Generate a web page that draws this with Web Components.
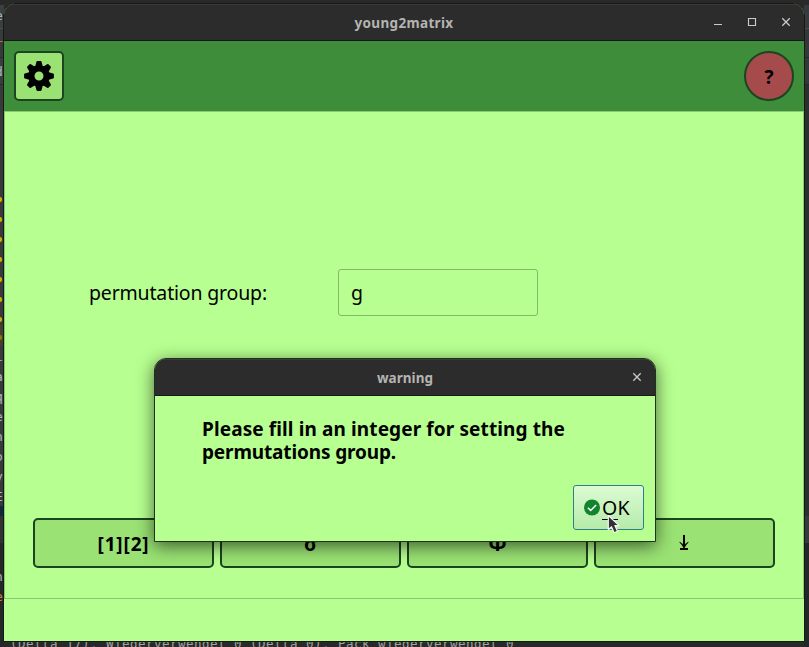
<!DOCTYPE html>
<html lang="en">
<head>
<meta charset="utf-8">
<title>young2matrix</title>
<style>
html,body{margin:0;width:809px;height:647px;overflow:hidden;background:#292929}
body{font-family:"Noto Sans","Open Sans",sans-serif;color:#000}
</style>
</head>
<body>
<y2m-desktop></y2m-desktop>
<script>
const define = (name, html, setup) => customElements.define(name, class extends HTMLElement {
  constructor() {
    super();
    const t = document.createElement('template');
    t.innerHTML = html;
    const root = this.attachShadow({mode: 'open'});
    root.append(t.content.cloneNode(true));
    if (setup) setup(this, root);
  }
});

define('code-backdrop', `
<style>
:host{display:block;width:809px;height:647px;position:relative;overflow:hidden;background:#292929;font:13px/20px "DejaVu Sans Mono",monospace;color:#a9b7c6}
.gutter{position:absolute;left:0;top:5px;width:4px;height:642px;overflow:hidden;background:linear-gradient(#3c3f41 0 23px,#4b4d4f 23px 24px,#373a3c 24px 52px,#292b2c 52px 53px,#3a3d3f 53px 79px,#292b2c 79px 80px,#38393a 80px 320px,#45402c 320px 341px,#38393a 341px 501px,#0d293e 501px 511px,#303233 511px 538px,#252627 538px)}
.right{position:absolute;right:0;top:5px;width:5px;height:642px;background:linear-gradient(#373a3e 0 23px,#494c50 23px 24px,#34373b 24px 52px,#282a2d 52px 53px,#34373b 53px 79px,#27292b 79px 80px,#2c2e30 80px 511px,#37393d 511px 538px,#242528 538px)}
.dots{position:absolute;left:-2px;top:192px;display:grid;grid-auto-rows:20px}
.dots i{width:4px;height:5px;border-radius:2px;background:#dca900}
.dots i:last-child{background:#8c7a08;margin-top:-2px}
.letters{position:absolute;left:-5px;top:342px;display:grid;grid-auto-rows:20px;line-height:20px}
.top{position:absolute;left:-5px;top:1px;display:grid;grid-auto-rows:28px}
.top b{font-weight:400;color:#cc7832}
.o{color:#c98540}
.last{position:absolute;left:10px;top:634px;font:12.5px/20px "DejaVu Sans Mono",monospace;color:#a4a09b;white-space:pre}
</style>
<div class="gutter">
 <div class="top"><span>e</span><b>r</b><span>d</span></div>
 <div class="dots"><i></i><i></i><i></i><i></i><i></i><i></i><i></i><i></i></div>
 <div class="letters"><span>i</span><span>a</span><span>q</span><span>e</span><span>n</span><span>o</span><span>y</span><span>E</span><span></span><span></span><span></span><span>n</span><span class="o">e</span></div>
</div>
<div class="right"></div>
<div class="last"><fit-text width="504">(Delta 17), Wiederverwendet 0 (Delta 0), Pack wiederverwendet 0</fit-text></div>`);

define('window-control', `
<style>:host{display:block;width:12px;height:12px}svg{display:block;fill:none;stroke:#cbcbcb;stroke-width:1.3}</style>
<svg width="12" height="12"></svg>`, (host, root) => {
  const shapes = {
    min: '<path d="M2 8.5h8" stroke-width="1"/>',
    max: '<path d="M2.5 2.5h7v7h-7z" stroke-width="1.15"/>',
    close: '<path d="M2.3 2.3l7.4 7.4M9.7 2.3L2.3 9.7"/>'
  };
  root.querySelector('svg').innerHTML = shapes[host.getAttribute('kind')];
});

define('title-bar', `
<style>
:host{display:grid;grid-template-columns:1fr auto 1fr;align-items:center;box-sizing:border-box;height:37px;background:#2c2c2c;border-top:1px solid #3a3a3a;border-bottom:1px solid #191919;color:#b4b4b1;font-size:13.5px;font-weight:700}
.title{grid-column:2;line-height:20px;padding-top:1px}
.controls{display:flex;justify-content:flex-end;gap:22px;padding:0 12px 2px 0}
</style>
<div class="title"><slot></slot></div><div class="controls"><slot name="controls"></slot></div>`);

define('app-window', `
<style>
:host{display:flex;flex-direction:column;box-sizing:border-box;border:1px solid #141b10;border-radius:12px 12px 0 0;background:#b7ff90;overflow:hidden}
</style><slot></slot>`);

define('tool-button', `
<style>
:host{display:flex;align-items:center;justify-content:center;box-sizing:border-box;height:50px;border:2px solid #1d4420;border-radius:5px;background:#99e273;font-size:19px;font-weight:700;line-height:24px}
:host([round]){width:50px;border-radius:50%;background:#a54b4b}
:host([square]){width:50px}
</style><slot></slot>`);

define('gear-icon', `
<style>:host{display:block;width:30px;height:30px}svg{display:block}</style>
<svg width="30" height="30" viewBox="-15 -15 30 30">
<g id="teeth"></g><circle r="7.6" fill="none" stroke="#000" stroke-width="6.2"/></svg>`, (host, root) => {
  root.querySelector('g').innerHTML = [0,45,90,135,180,225,270,315].map(a =>
    `<path transform="rotate(${a})" d="M-3.9-9L-2.6-14.1Q-2.4-14.9-1.6-14.9H1.6Q2.4-14.9 2.6-14.1L3.9-9z"/>`).join('');
});

define('app-header', `
<style>:host{display:flex;align-items:center;justify-content:space-between;box-sizing:border-box;height:70px;padding:0 10px;background:#3d8d3b}
span{padding-top:1px}</style>
<tool-button square><gear-icon></gear-icon></tool-button>
<tool-button round><span>?</span></tool-button>`);

define('text-field', `
<style>:host{display:flex;align-items:center;box-sizing:border-box;width:200px;height:47px;padding-left:12px;border:1px solid #83b968;border-radius:3px}</style><slot></slot>`);

define('group-form', `
<style>
:host{display:flex;flex-direction:column;box-sizing:border-box;height:488px;border:1px solid #8bc970;padding:157px 28px 30px;font-size:19.5px;line-height:26px}
.row{display:grid;grid-template-columns:249px 200px;align-items:center;padding-left:56px}
.buttons{display:grid;grid-template-columns:181px 181px 181px 181px;gap:6px;margin-top:auto}
.buttons span{padding-top:2px}
.greek{font-size:20px}
svg{display:block;margin-right:2px}
</style>
<div class="row"><label><fit-text width="178">permutation group:</fit-text></label><text-field>g</text-field></div>
<div class="buttons">
<tool-button><span><fit-text width="52">[1][2]</fit-text></span></tool-button>
<tool-button><span class="greek">σ</span></tool-button>
<tool-button><span class="greek">Φ</span></tool-button>
<tool-button><svg width="10" height="16"><path d="M5 0v11M1 14h8" fill="none" stroke="#000" stroke-width="2"/><path d="M.7 7.2Q3 8.5 5 10.2Q7 8.5 9.3 7.2Q6.6 9.8 5 13.4Q3.4 9.8.7 7.2z" stroke="#000" stroke-width=".6"/></svg></tool-button>
</div>`);

define('ok-button', `
<style>
:host{display:flex;align-items:center;box-sizing:border-box;width:71px;height:45px;padding-left:10px;gap:1px;border:1px solid #2f7d8c;border-radius:3px;background:linear-gradient(#dcfbd4,#b5eba9);font-size:19.5px;line-height:26px}
svg{display:block;margin-bottom:1px}
u{text-decoration:none;border-bottom:1px solid #000;display:inline-block;height:24px}
</style>
<svg width="17" height="17"><circle cx="8" cy="8.5" r="8" fill="#12842c"/><path d="M3.9 8.7l2.8 2.8 5.4-5.6" fill="none" stroke="#fff" stroke-width="1.5"/></svg>
<fit-text width="28"><u>O</u>K</fit-text>`);

define('warning-body', `
<style>
:host{display:flex;flex:1;flex-direction:column;box-sizing:border-box;padding:22px 11px 11px 47px;font-size:19px;line-height:23px;font-weight:700}
ok-button{margin-top:auto;align-self:flex-end;font-weight:400}
.line{display:block}
</style>
<div class="line"><fit-text width="363">Please fill in an integer for setting the</fit-text></div>
<div class="line"><fit-text width="194">permutations group.</fit-text></div>
<ok-button></ok-button>`);

define('mouse-pointer', `
<style>:host{display:block;width:14px;height:21px}svg{display:block}</style>
<svg width="14" height="21"><path d="M1.3 1.5v14.2l3.2-2.9 2.6 5.9 3.4-1.5-2.6-5.6h4.2z" fill="#303030" stroke="#f5f5f5" stroke-width="1.2" stroke-linejoin="round"/></svg>`);

define('y2m-desktop', `
<style>
:host{display:block;position:relative;width:809px;height:647px;overflow:hidden}
.main{position:absolute;left:3px;top:3px;width:802px;height:639px}
.dialog{position:absolute;left:154px;top:358px;width:502px;height:184px;border-color:#20331a;box-shadow:0 4px 17px rgba(0,0,0,.6)}
mouse-pointer{position:absolute;left:607px;top:514px}
</style>
<code-backdrop></code-backdrop>
<app-window class="main">
 <title-bar><fit-text width="99">young2matrix</fit-text><window-control slot="controls" kind="min"></window-control><window-control slot="controls" kind="max"></window-control><window-control slot="controls" kind="close"></window-control></title-bar>
 <app-header></app-header>
 <group-form></group-form>
</app-window>
<app-window class="dialog">
 <title-bar><fit-text width="56">warning</fit-text><window-control slot="controls" kind="close"></window-control></title-bar>
 <warning-body></warning-body>
</app-window>
<mouse-pointer></mouse-pointer>`);

// Text run whose tracking is adjusted so that it fills a given width.
customElements.define('fit-text', class extends HTMLElement {
  constructor() {
    super();
    this.attachShadow({mode: 'open'}).innerHTML = '<style>:host{display:inline-block;white-space:pre;vertical-align:top}</style><slot></slot>';
  }
  connectedCallback() {
    const natural = this.getBoundingClientRect().width;
    const count = [...this.textContent].length;
    this.style.letterSpacing = ((+this.getAttribute('width') - natural) / count) + 'px';
  }
});
</script>
</body>
</html>
